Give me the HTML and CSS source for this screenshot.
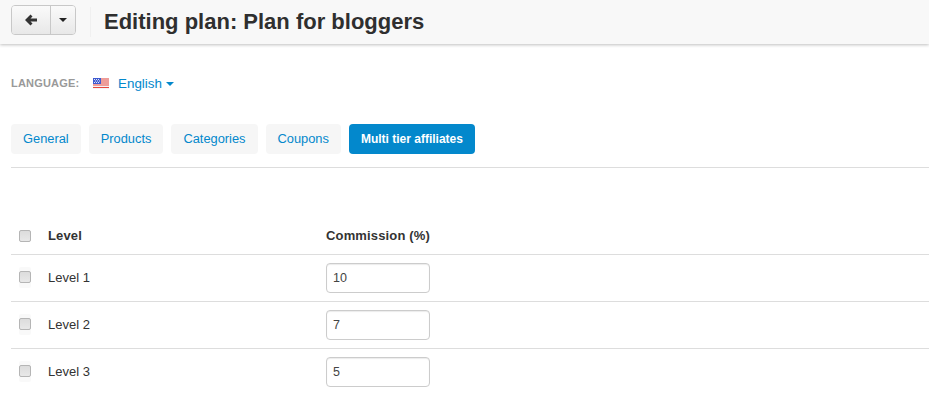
FILE: index.html
```html
<!DOCTYPE html>
<html lang="en">
<head>
<meta charset="UTF-8">
<meta name="viewport" content="width=device-width, initial-scale=1.0">
<title>Editing plan</title>
<link rel="stylesheet" href="styles.css">
</head>
<body>
    <div class="topbar">
        <div class="btn-group">
            <button class="tool-btn back">
                <svg width="14" height="12" viewBox="0 0 14 12"><path d="M6.500 0.500 L8.500 2.500 L6.500 4.500 H13 V7.500 H6.500 L8.500 9.500 L6.500 11.500 L1 6 Z" fill="#333"/></svg>
            </button>
            <button class="tool-btn more"><span class="caret-dark"></span></button>
        </div>
        <h1 class="title">Editing plan: Plan for bloggers</h1>
    </div>

    <div class="language">
        <span class="lang-label">LANGUAGE:</span>
        <svg class="flag" width="16" height="11" viewBox="0 0 16 11">
            <rect width="16" height="11" fill="#f4f4f4"/>
            <path d="M0 1h16M0 3h16M0 5h16M0 7h16M0 9.500h16" stroke="#e8473f" stroke-width="1"/>
            <rect width="8" height="6" fill="#3f5bd0"/>
            <path d="M1 1.500h1M3 1.500h1M5 1.500h1M2 3h1M4 3h1M6 3h1M1 4.500h1M3 4.500h1M5 4.500h1" stroke="#dfe4f7" stroke-width="1"/>
        </svg>
        <a class="lang-link" href="#">English<span class="caret-blue"></span></a>
    </div>

    <div class="tabs">
        <a class="tab" href="#">General</a>
        <a class="tab" href="#">Products</a>
        <a class="tab" href="#">Categories</a>
        <a class="tab" href="#">Coupons</a>
        <a class="tab active" href="#">Multi tier affiliates</a>
    </div>

    <table class="levels">
        <thead>
            <tr>
                <th class="check"><span class="checkbox"></span></th>
                <th class="name">Level</th>
                <th>Commission (%)</th>
            </tr>
        </thead>
        <tbody>
            <tr>
                <td class="check"><span class="checkbox"></span></td>
                <td class="name">Level 1</td>
                <td><input class="field" type="text" value="10"></td>
            </tr>
            <tr>
                <td class="check"><span class="checkbox"></span></td>
                <td class="name">Level 2</td>
                <td><input class="field" type="text" value="7"></td>
            </tr>
            <tr>
                <td class="check"><span class="checkbox"></span></td>
                <td class="name">Level 3</td>
                <td><input class="field" type="text" value="5"></td>
            </tr>
        </tbody>
    </table>
</body>
</html>
```

FILE: styles.css
```css
body {
    margin: 0;
    background-color: #fff;
    color: #333;
    font-family: "Liberation Sans", Arial, sans-serif;
    font-size: 13px;
    overflow: hidden;
}
.topbar {
    display: flex;
    align-items: flex-start;
    height: 44px;
    padding-left: 11px;
    background-color: #f8f8f8;
    box-shadow: 0 1px 3px rgba(0, 0, 0, 0.25);
}
.btn-group {
    display: flex;
    margin-top: 5px;
    height: 30px;
    border: 1px solid #c8c8c8;
    border-radius: 4px;
    box-sizing: border-box;
    overflow: hidden;
}
.tool-btn {
    display: flex;
    align-items: center;
    justify-content: center;
    padding: 0;
    border: none;
    background: linear-gradient(#fafafa, #e8e8e8);
}
.back {
    width: 39px;
    border-right: 1px solid #c8c8c8;
}
.more {
    width: 24px;
}
.caret-dark {
    border-left: 4px solid transparent;
    border-right: 4px solid transparent;
    border-top: 4px solid #222;
}
.title {
    margin: 7px 0 0 14px;
    padding-left: 13px;
    height: 30px;
    border-left: 1px solid #f0f0f0;
    font-size: 22px;
    line-height: 29px;
    font-weight: bold;
    color: #2f2f2f;
}
.language {
    display: flex;
    align-items: center;
    height: 20px;
    margin-top: 29px;
    padding-left: 11px;
}
.lang-label {
    width: 82px;
    font-size: 11px;
    font-weight: bold;
    letter-spacing: 0.2px;
    color: #999;
}
.flag {
    margin-right: 9px;
}
.lang-link {
    color: #0388cc;
    font-size: 13.400px;
    text-decoration: none;
}
.caret-blue {
    display: inline-block;
    margin-left: 4px;
    vertical-align: middle;
    border-left: 4px solid transparent;
    border-right: 4px solid transparent;
    border-top: 4px solid #0388cc;
}
.tabs {
    display: flex;
    gap: 8px;
    margin: 31px 0 0 11px;
    padding-bottom: 13px;
    border-bottom: 1px solid #ddd;
}
.tab {
    padding: 0 12px;
    height: 30px;
    line-height: 30px;
    border-radius: 4px;
    background-color: #f6f6f6;
    color: #0388cc;
    font-size: 12.850px;
    text-decoration: none;
}
.tab.active {
    background-color: #0388cc;
    color: #fff;
    font-size: 12px;
    font-weight: bold;
}
.levels {
    width: 100%;
    margin: 46px 0 0 11px;
    border-collapse: collapse;
}
.levels th {
    height: 40px;
    padding: 4px 0 0;
    box-sizing: border-box;
    text-align: left;
    font-size: 13px;
    letter-spacing: 0.15px;
    border-bottom: 1px solid #ddd;
}
.levels td {
    height: 47px;
    padding: 0;
    box-sizing: border-box;
    border-bottom: 1px solid #ddd;
}
.levels tbody tr:last-child td {
    border-bottom: none;
}
.levels .check {
    width: 37px;
    padding-left: 8px;
    line-height: 0;
}
.levels td.check {
    padding-bottom: 2px;
}
.levels td .checkbox {
    box-shadow: 0 -4px 0 #f9f9f9, 0 5px 0 #f9f9f9;
}
.name {
    width: 278px;
}
.checkbox {
    display: inline-block;
    width: 10px;
    height: 10px;
    border: 1px solid #b5b5b5;
    border-radius: 2px;
    background: linear-gradient(#dcdcdc, #e8e8e8);
}
.field {
    display: block;
    box-sizing: border-box;
    width: 104px;
    height: 30px;
    padding: 0 6px;
    border: 1px solid #ccc;
    border-radius: 4px;
    box-shadow: inset 0 1px 1px rgba(0, 0, 0, 0.08);
    color: #444;
    font-family: inherit;
    font-size: 12.500px;
}
```
